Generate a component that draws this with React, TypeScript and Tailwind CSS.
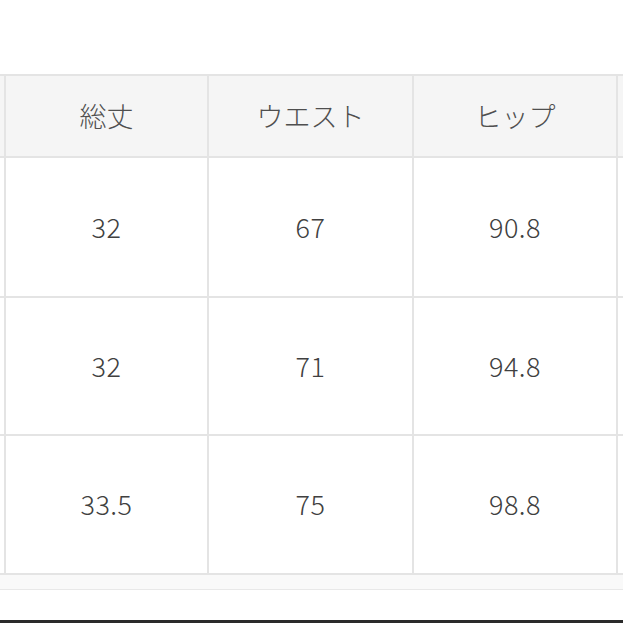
import React from "react";

const headers = ["総丈", "ウエスト", "ヒップ"];
const rows = [
  ["32", "67", "90.8"],
  ["32", "71", "94.8"],
  ["33.5", "75", "98.8"],
];
const rowHeights = ["h-[138px]", "h-[136px]", "h-[137px]"];

export default function App() {
  return (
    <div
      className="w-[623px] h-[623px] bg-white overflow-hidden flex flex-col font-light"
      style={{ fontFamily: '"Noto Sans CJK JP", "Noto Sans", sans-serif' }}
    >
      <div className="h-[74px] shrink-0" />
      <div className="grid grid-cols-[4px_201px_203px_202px_1fr] gap-[2px] bg-[#e4e4e4] py-[2px] w-[627px]">
        <div className="bg-[#f5f5f5] h-[80px]" />
        {headers.map((h) => (
          <div
            key={h}
            className="bg-[#f5f5f5] h-[80px] flex items-center justify-center text-[27px] text-[#4f4f4f]"
          >
            {h}
          </div>
        ))}
        <div className="bg-[#f5f5f5] h-[80px]" />
        {rows.map((r, i) => (
          <React.Fragment key={i}>
            <div className={`bg-white ${rowHeights[i]}`} />
            {r.map((v, j) => (
              <div
                key={j}
                className={`bg-white ${rowHeights[i]} flex items-center justify-center text-[27px] text-[#404040] tracking-[0.5px]`}
              >
                {v}
              </div>
            ))}
            <div className={`bg-white ${rowHeights[i]}`} />
          </React.Fragment>
        ))}
      </div>
      <div className="h-[14px] bg-[#f9f9f9] shrink-0" />
      <div className="h-[1px] bg-[#e8e8e8] shrink-0" />
      <div className="flex-1" />
      <div className="h-[3px] bg-[#2a2a2a] shrink-0" />
    </div>
  );
}
